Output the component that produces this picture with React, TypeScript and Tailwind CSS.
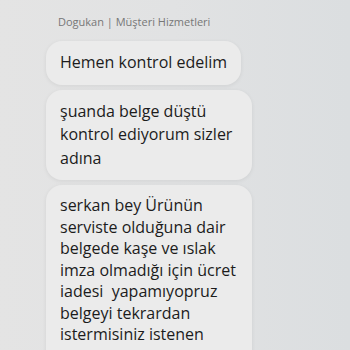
const lines2 = ['şuanda belge düştü', 'kontrol ediyorum sizler', 'adına'];
const lines3 = [
  'serkan bey Ürünün',
  'serviste olduğuna dair',
  'belgede kaşe ve ıslak',
  'imza olmadığı için ücret',
  'iadesi  yapamıyopruz',
  'belgeyi tekrardan',
  'istermisiniz istenen',
  'belge',
];

const Bubble = ({ lines, className }: { lines: string[]; className: string }) => (
  <div
    className={`rounded-[16px] bg-[#ebebeb] px-[14px] py-[10px] text-[16px] text-[#1c1c1c] whitespace-pre shadow-[0_1px_4px_rgba(0,0,0,0.07)] ${className}`}
  >
    {lines.join('\n')}
  </div>
);

export default function App() {
  return (
    <div className="h-[350px] w-[350px] overflow-hidden bg-gradient-to-r from-[#e4e4e4] via-[#e1e2e3] to-[#dbdee0] font-['Open_Sans',sans-serif]">
      <div className="pl-[46px] pt-[14px]">
        <div className="pl-[12px] text-[11px] leading-[16px] text-[#777]">Dogukan | Müşteri Hizmetleri</div>
        <div className="mt-[11px] flex flex-col gap-[5px]">
          <Bubble lines={['Hemen kontrol edelim']} className="w-fit leading-[23.5px]" />
          <Bubble lines={lines2} className="w-[206px] leading-[23.5px]" />
          <Bubble lines={lines3} className="w-[206px] leading-[21.5px]" />
        </div>
      </div>
    </div>
  );
}
